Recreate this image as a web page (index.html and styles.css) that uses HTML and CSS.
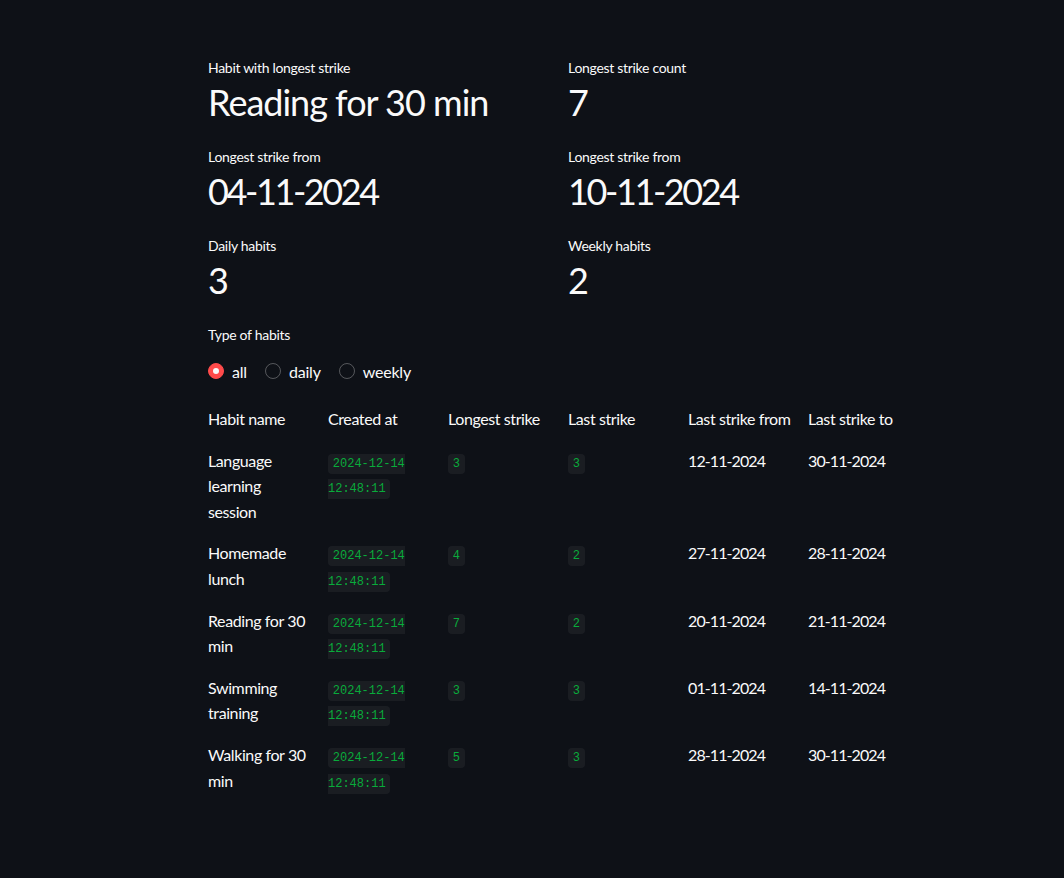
FILE: index.html
```html
<!DOCTYPE html>
<html lang="en">
<head>
<meta charset="utf-8">
<title>Habits</title>
<link rel="stylesheet" href="styles.css">
</head>
<body>
<div class="app">
  <div class="metrics">
    <div class="metric"><div class="m-label">Habit with longest strike</div><div class="m-value">Reading for 30 min</div></div>
    <div class="metric"><div class="m-label">Longest strike count</div><div class="m-value">7</div></div>
    <div class="metric"><div class="m-label">Longest strike from</div><div class="m-value num">04-11-2024</div></div>
    <div class="metric"><div class="m-label">Longest strike from</div><div class="m-value num">10-11-2024</div></div>
    <div class="metric"><div class="m-label">Daily habits</div><div class="m-value">3</div></div>
    <div class="metric"><div class="m-label">Weekly habits</div><div class="m-value">2</div></div>
  </div>

  <div class="radio-widget">
    <div class="r-label">Type of habits</div>
    <div class="r-group">
      <label class="r-opt"><span class="dot on"></span><span>all</span></label>
      <label class="r-opt"><span class="dot"></span><span>daily</span></label>
      <label class="r-opt"><span class="dot"></span><span>weekly</span></label>
    </div>
  </div>

  <div class="table">
    <div class="row">
      <div>Habit name</div><div>Created at</div><div>Longest strike</div><div>Last strike</div><div>Last strike from</div><div>Last strike to</div>
    </div>
    <div class="row">
      <div>Language learning session</div><div><code>2024-12-14 12:48:11</code></div><div><code>3</code></div><div><code>3</code></div><div class="num">12-11-2024</div><div class="num">30-11-2024</div>
    </div>
    <div class="row">
      <div>Homemade lunch</div><div><code>2024-12-14 12:48:11</code></div><div><code>4</code></div><div><code>2</code></div><div class="num">27-11-2024</div><div class="num">28-11-2024</div>
    </div>
    <div class="row">
      <div>Reading for 30 min</div><div><code>2024-12-14 12:48:11</code></div><div><code>7</code></div><div><code>2</code></div><div class="num">20-11-2024</div><div class="num">21-11-2024</div>
    </div>
    <div class="row">
      <div>Swimming training</div><div><code>2024-12-14 12:48:11</code></div><div><code>3</code></div><div><code>3</code></div><div class="num">01-11-2024</div><div class="num">14-11-2024</div>
    </div>
    <div class="row">
      <div>Walking for 30 min</div><div><code>2024-12-14 12:48:11</code></div><div><code>5</code></div><div><code>3</code></div><div class="num">28-11-2024</div><div class="num">30-11-2024</div>
    </div>
  </div>
</div>
</body>
</html>
```
FILE: styles.css
```css
html, body {
  margin: 0;
  background: #0e1117;
  color: #fafafa;
  font-family: Lato, "Noto Sans", sans-serif;
}
.app {
  padding: 56px 152px 60px 208px;
}
.metrics {
  display: grid;
  grid-template-columns: 1fr 1fr;
  column-gap: 16px;
  row-gap: 16px;
}
.m-label {
  font-size: 14px;
  line-height: 24px;
  height: 24px;
  letter-spacing: -0.3px;
}
.m-value {
  font-size: 36px;
  line-height: 45px;
  height: 49px;
  letter-spacing: -1px;
}
.m-value.num {
  letter-spacing: -2.4px;
}
.radio-widget {
  margin-top: 16px;
}
.r-label {
  font-size: 14px;
  line-height: 24px;
  letter-spacing: -0.3px;
}
.r-group {
  display: flex;
  margin-top: 12px;
  height: 24px;
  align-items: center;
}
.r-opt {
  display: flex;
  align-items: center;
  gap: 8px;
  font-size: 16px;
  margin-right: 18px;
  letter-spacing: -0.2px;
}
.dot {
  width: 16px;
  height: 16px;
  box-sizing: border-box;
  border-radius: 50%;
  border: 1px solid rgba(250, 250, 250, 0.3);
  display: inline-flex;
  align-items: center;
  justify-content: center;
}
.dot.on {
  background: #ff4b4b;
  border-color: #ff4b4b;
}
.dot.on::after {
  content: "";
  width: 6px;
  height: 6px;
  border-radius: 50%;
  background: #fafafa;
}
.table {
  margin-top: 23px;
  display: flex;
  flex-direction: column;
  gap: 16px;
}
.row {
  display: grid;
  grid-template-columns: repeat(6, 104px);
  column-gap: 16px;
  font-size: 16px;
  line-height: 25.6px;
  letter-spacing: -0.4px;
}
.row .num {
  letter-spacing: -0.9px;
}
code {
  font-family: "Liberation Mono", "DejaVu Sans Mono", monospace;
  font-size: 12px;
  line-height: 1;
  letter-spacing: 0;
  color: #09ab3b;
  background: rgba(250, 250, 250, 0.05);
  padding: 3px 4.8px;
  border-radius: 4px;
}
```
